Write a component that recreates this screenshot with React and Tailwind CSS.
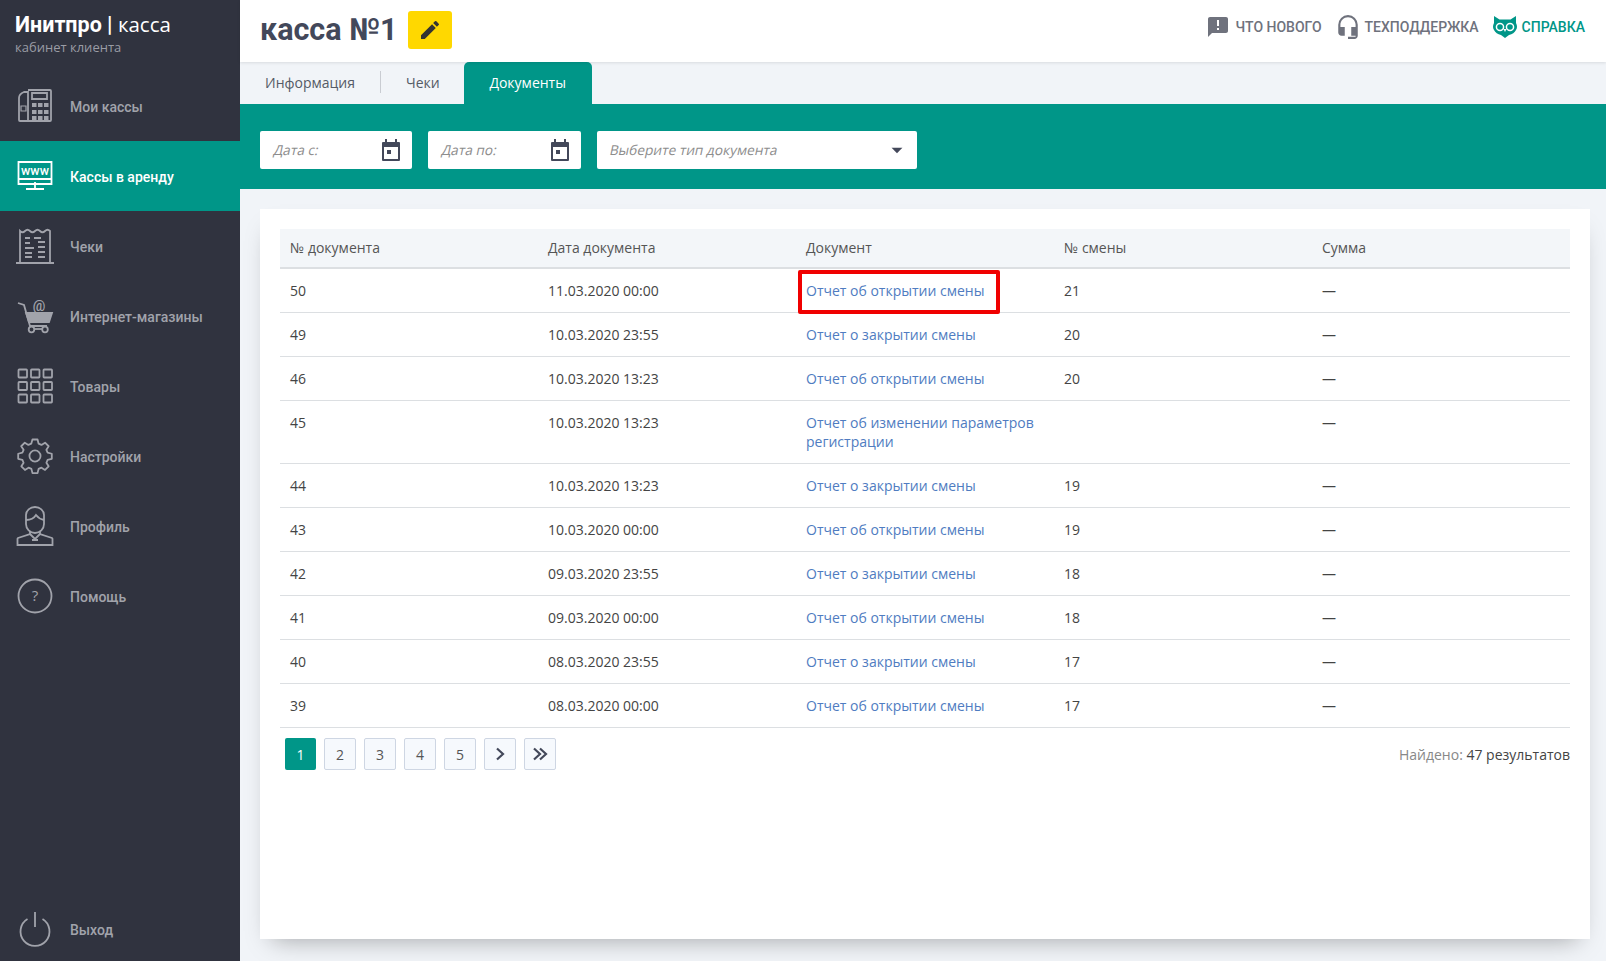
import React from "react";
import { MdEdit, MdAnnouncement, MdHeadsetMic, MdArrowDropDown } from "react-icons/md";

const s = { fill: "none", stroke: "currentColor", strokeWidth: 1.8 };
const Phone = () => (
  <svg width="36" height="36" viewBox="0 0 36 36" {...s}>
    <path d="M7 4h4v29H3a1 1 0 0 1-1-1V10q0-4 5-6zM11 2h22a1 1 0 0 1 1 1v29a1 1 0 0 1-1 1H11" />
    <path d="M15 5h15v6H15z" /><path d="M4 18h5v5H4z" strokeWidth="1.2" />
    <g fill="currentColor" stroke="none">
      {[15, 22, 28].map((y) => [15, 21, 27].map((x) => <rect key={x + "-" + y} x={x} y={y} width="4.5" height="4" />))}
    </g>
  </svg>
);
const Www = () => (
  <svg width="36" height="36" viewBox="0 0 36 36" fill="none" stroke="currentColor" strokeWidth="1.8">
    <path d="M1.5 4h33v22h-33zM1.5 21h33M18 24v6M9 31h18" />
    <text x="18" y="17" textAnchor="middle" fill="currentColor" stroke="none" fontSize="12.5" fontFamily="Roboto, sans-serif">www</text>
  </svg>
);
const Receipt = () => (
  <svg width="40" height="36" viewBox="0 0 40 36" {...s}>
    <path d="M5 35V3q2.500 2.500 5 0t5 0 5 0 5 0 5 0 5 0v32M1 35h38" />
    <path d="M10 10h5M19 10h7M10 15h5M10 20h9M10 25h7M10 29h7M23 14h7M23 19h7M23 24h7M23 29h7" />
  </svg>
);
const Cart = () => (
  <svg width="36" height="36" viewBox="0 0 36 36" className="overflow-visible" {...s}>
    <path d="M1 5l6 2 6 21h17" />
    <path d="M9 15h26l-3 9H12z" fill="currentColor" />
    <circle cx="14.500" cy="31.500" r="2.800" /><circle cx="28" cy="31.500" r="2.800" />
    <path d="M17 31h8" />
    <text x="22" y="13" textAnchor="middle" fill="currentColor" stroke="none" fontSize="14" fontFamily="Roboto, sans-serif">@</text>
  </svg>
);
const Grid3 = () => (
  <svg width="36" height="36" viewBox="0 0 36 36" fill="none" stroke="currentColor" strokeWidth="1.8">
    {[1.5, 14, 26.5].map((y) => [1.5, 14, 26.5].map((x) => <rect key={x + "-" + y} x={x} y={y} width="8.500" height="8" rx="0.7" />))}
  </svg>
);
const Gear = () => (
  <svg width="36" height="36" viewBox="0 0 24 24" fill="none" stroke="currentColor" strokeWidth="1.2" strokeLinejoin="round">
    <path d="M10.300 1h3.400l.7 2.800 1.900.8 2.400-1.500 2.400 2.400-1.500 2.400.8 1.900 2.800.7v3.400l-2.800.7-.8 1.900 1.500 2.400-2.400 2.400-2.400-1.500-1.900.8-.7 2.800h-3.400l-.7-2.800-1.900-.8-2.400 1.500-2.400-2.400 1.500-2.400-.8-1.900-2.800-.7v-3.400l2.800-.7.8-1.900L2.800 5.500l2.400-2.400 2.400 1.500 1.900-.8z" />
    <circle cx="12" cy="12" r="3.700" />
  </svg>
);
const Person = () => (
  <svg width="38" height="40" viewBox="0 0 38 40" {...s}>
    <path d="M10 9a9 8 0 0 1 18 0v9a9 9 0 0 1-18 0z" />
    <path d="M10 14q7 0 10-5 3 4 8 5" />
    <path d="M14 25v3L2 32a1 1 0 0 0-.5 1v6h35v-6a1 1 0 0 0-.5-1l-12-4v-3" />
    <path d="M14 28l5 5 5-5M16 34h6" />
  </svg>
);
const Help = () => (
  <svg width="36" height="36" viewBox="0 0 36 36" {...s}>
    <circle cx="18" cy="18" r="16.500" />
    <text x="18" y="23" textAnchor="middle" fill="currentColor" stroke="none" fontSize="15" fontFamily="Open Sans, sans-serif">?</text>
  </svg>
);
const Power = () => (
  <svg width="36" height="36" viewBox="0 0 36 36" {...s}>
    <path d="M10.500 8a14.500 14.500 0 1 0 15 0M18 1v15" />
  </svg>
);
const Owl = () => (
  <svg width="24" height="22" viewBox="0 0 24 22">
    <path fill="#009688" d="M1 0l5.500 3.500h11L23 0v7q2 4 0 7-2 4-7 5l-4 3-4-3q-5-1-7-5-2-3 0-7z" />
    <circle cx="7" cy="11" r="4.300" fill="#fff" /><circle cx="17" cy="11" r="4.300" fill="#fff" />
    <circle cx="7" cy="11" r="2.800" fill="#009688" /><circle cx="17" cy="11" r="2.800" fill="#009688" />
    <path d="M10.500 13h3L12 16z" fill="#fff" />
  </svg>
);
const Cal = () => (
  <svg width="24" height="24" viewBox="0 0 24 24" fill="#43485a">
    <path d="M6 1h2v3h8V1h2v3h2a1 1 0 0 1 1 1v17a1 1 0 0 1-1 1H4a1 1 0 0 1-1-1V5a1 1 0 0 1 1-1h2zM5 9v12h14V9z" />
    <rect x="8" y="12" width="4" height="4" />
  </svg>
);

const nav = [
  ["Мои кассы", Phone],
  ["Кассы в аренду", Www, true],
  ["Чеки", Receipt],
  ["Интернет-магазины", Cart],
  ["Товары", Grid3],
  ["Настройки", Gear],
  ["Профиль", Person],
  ["Помощь", Help],
];

const rows = [
  ["50", "11.03.2020 00:00", "Отчет об открытии смены", "21"],
  ["49", "10.03.2020 23:55", "Отчет о закрытии смены", "20"],
  ["46", "10.03.2020 13:23", "Отчет об открытии смены", "20"],
  ["45", "10.03.2020 13:23", "Отчет об изменении параметров регистрации", ""],
  ["44", "10.03.2020 13:23", "Отчет о закрытии смены", "19"],
  ["43", "10.03.2020 00:00", "Отчет об открытии смены", "19"],
  ["42", "09.03.2020 23:55", "Отчет о закрытии смены", "18"],
  ["41", "09.03.2020 00:00", "Отчет об открытии смены", "18"],
  ["40", "08.03.2020 23:55", "Отчет о закрытии смены", "17"],
  ["39", "08.03.2020 00:00", "Отчет об открытии смены", "17"],
];

function NavItem({ label, Icon, active }) {
  return (
    <div className={"h-[70px] flex items-center pl-[15px] font-medium text-[14px] " + (active ? "bg-[#009688] text-white" : "text-[#a1a3ab]")}>
      <span className="w-[40px] flex justify-center shrink-0"><Icon /></span>
      <span className="ml-[15px] pt-[2px]">{label}</span>
    </div>
  );
}

function DateField({ label, w }) {
  return (
    <div className={"h-[38px] bg-white rounded-[2px] flex items-center justify-between pl-[14px] pr-[9px] " + w}>
      <span className="inline-block -skew-x-12 text-[13.7px] text-[#8d8d8d]">{label}</span>
      <Cal />
    </div>
  );
}

export default function App() {
  return (
    <div className="flex h-screen bg-[#f1f4f8] font-['Open_Sans',sans-serif] overflow-hidden">
      <aside className="w-[240px] shrink-0 bg-[#30333f] flex flex-col font-['Roboto',sans-serif]">
        <div className="h-[71px] pl-[15px] pt-[11px]">
          <div className="text-[21.5px] leading-[26px] text-white"><b className="font-bold">Инитпро | </b><span className="text-[20.500px] font-['Open_Sans',sans-serif]">касса</span></div>
          <div className="text-[13px] leading-[18px] text-[#9a9ca5] font-['Open_Sans',sans-serif]">кабинет клиента</div>
        </div>
        {nav.map(([l, I, a]) => <NavItem key={l} label={l} Icon={I} active={a} />)}
        <div className="mt-auto mb-[-3px]"><NavItem label="Выход" Icon={Power} /></div>
      </aside>

      <main className="flex-1 flex flex-col min-w-0">
        <header className="h-[62px] shrink-0 bg-white flex items-center pl-[20px] pr-[21px] shadow-[0_1px_3px_rgba(0,0,0,0.1)] z-10">
          <h1 className="text-[30.5px] font-bold text-[#43485a] font-['Roboto',sans-serif] mb-[3px]">касса №1</h1>
          <button className="ml-[10px] mb-[2px] w-[44px] h-[38px] rounded-[3px] bg-[#ffd800] flex items-center justify-center text-[#333]"><MdEdit size={24} /></button>
          <div className="ml-auto mb-[8px] flex items-center font-['Roboto',sans-serif] font-medium text-[14px] text-[#6f727d] uppercase">
            <MdAnnouncement size={24} className="mr-[6px] text-[#6f727d]" />
            <span>Что нового</span>
            <MdHeadsetMic size={26} className="ml-[13px] mr-[4px]" />
            <span>Техподдержка</span>
            <span className="ml-[14px] mr-[5px]"><Owl /></span>
            <span className="text-[#009688]">Справка</span>
          </div>
        </header>

        <nav className="h-[42px] shrink-0 flex items-center text-[14px] text-[#555b66] pl-[25px]">
          <span className="mb-[2px]">Информация</span>
          <span className="w-px h-[22px] bg-[#c9ccd2] ml-[25px] mb-[2px]" />
          <span className="ml-[25px] mb-[2px]">Чеки</span>
          <span className="ml-[24px] w-[128px] h-[42px] pb-[1px] bg-[#009688] rounded-t-[5px] flex items-center justify-center text-white">Документы</span>
        </nav>

        <div className="h-[85px] shrink-0 bg-[#009688] flex items-center gap-[16px] pl-[20px] pt-[7px]">
          <DateField label="Дата с:" w="w-[152px]" />
          <DateField label="Дата по:" w="w-[153px]" />
          <div className="w-[320px] h-[38px] bg-white rounded-[2px] flex items-center justify-between pl-[13px] pr-[7px]">
            <span className="inline-block -skew-x-12 text-[13.7px] text-[#8d8d8d]">Выберите тип документа</span>
            <MdArrowDropDown size={26} className="text-[#43485a]" />
          </div>
        </div>

        <section className="flex-1 mt-[20px] mb-[22px] ml-[20px] mr-[16px] bg-white p-[20px] shadow-[0_12px_24px_-12px_rgba(0,0,0,0.35)]">
          <div className="relative text-[14px] leading-[19px] text-[#444]">
            <div className="grid grid-cols-5 h-[40px] pb-[2px] items-center bg-[#f3f6f9] border-b-2 border-[#dcdfe2] px-0 text-[#555]">
              {["№ документа", "Дата документа", "Документ", "№ смены", "Сумма"].map((h) => (
                <div key={h} className="px-[10px]">{h}</div>
              ))}
            </div>
            {rows.map((r) => (
              <div key={r[0]} className="grid grid-cols-5 border-b border-[#dcdfe2] py-[12px]">
                <div className="px-[10px]">{r[0]}</div>
                <div className="px-[10px]">{r[1]}</div>
                <div className="px-[10px] text-[#4f7cc1]">{r[2]}</div>
                <div className="px-[10px]">{r[3]}</div>
                <div className="px-[10px]">—</div>
              </div>
            ))}
            <div className="absolute left-[518px] top-[41px] w-[202px] h-[44px] border-[4px] border-[#f00000] rounded-[2px]" />
          </div>
          <div className="flex items-center justify-between mt-[10px] text-[14px]">
            <div className="flex gap-[8px] pl-[5px]">
              <span className="w-[31px] h-[32px] rounded-[2px] bg-[#009688] text-white flex items-center justify-center">1</span>
              {["2", "3", "4", "5"].map((n) => (
                <span key={n} className="w-[32px] h-[32px] rounded-[2px] border border-[#ced6e3] bg-[#f6f9fd] text-[#555] flex items-center justify-center">{n}</span>
              ))}
              <span className="w-[32px] h-[32px] rounded-[2px] border border-[#ced6e3] bg-[#f6f9fd] text-[#43485a] flex items-center justify-center">
                <svg width="14" height="14" viewBox="0 0 14 14" fill="none" stroke="currentColor" strokeWidth="2.200"><path d="M4 1.500l6 5.500-6 5.500" /></svg>
              </span>
              <span className="w-[32px] h-[32px] rounded-[2px] border border-[#ced6e3] bg-[#f6f9fd] text-[#43485a] flex items-center justify-center">
                <svg width="16" height="14" viewBox="0 0 16 14" fill="none" stroke="currentColor" strokeWidth="2.200"><path d="M2 1.500l6 5.500-6 5.500M8 1.500l6 5.500-6 5.500" /></svg>
              </span>
            </div>
            <div className="text-[#888]">Найдено: <span className="text-[#444]">47 результатов</span></div>
          </div>
        </section>
      </main>
    </div>
  );
}
